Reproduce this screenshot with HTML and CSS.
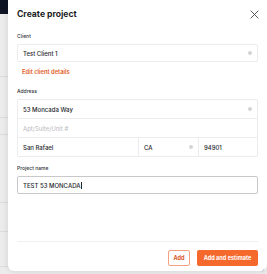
FILE: index.html
```html
<!DOCTYPE html>
<html lang="en">
<head>
    <meta charset="UTF-8">
    <meta name="viewport" content="width=device-width, initial-scale=1.0">
    <title>Create project</title>
    <link rel="stylesheet" href="styles.css">
</head>
<body>
    <div class="backdrop">
        <div class="page-top"></div>
        <div class="page-row" style="height: 62px"></div>
        <div class="page-row" style="height: 40px"></div>
        <div class="page-row" style="height: 16px"></div>
        <div class="page-row" style="height: 67px"></div>
        <div class="page-row" style="height: 28px"></div>
        <div class="page-row" style="height: 34px"></div>
    </div>

    <div class="modal">
        <div class="modal-head">
            <h1>Create project</h1>
            <button class="close" aria-label="Close">
                <svg width="9" height="9" viewBox="0 0 10 10"><path d="M1 1L9 9M9 1L1 9" stroke="#555" stroke-width="1.1" stroke-linecap="round"/></svg>
            </button>
        </div>

        <label class="label">Client</label>
        <div class="field">
            <span class="value">Test Client 1</span>
            <span class="clear"></span>
        </div>
        <a class="edit-link">Edit client details</a>

        <label class="label">Address</label>
        <div class="address">
            <div class="cell wide"><span class="value">53 Moncada Way</span><span class="clear"></span></div>
            <div class="cell wide"><span class="placeholder">Apt/Suite/Unit #</span></div>
            <div class="cell-row">
                <div class="cell city"><span class="value">San Rafael</span></div>
                <div class="cell state"><span class="value">CA</span><span class="clear"></span></div>
                <div class="cell zip"><span class="value">94901</span></div>
            </div>
        </div>

        <label class="label">Project name</label>
        <div class="field focused">
            <span class="value caps">TEST 53 MONCADA<span class="caret"></span></span>
        </div>

        <div class="modal-foot">
            <button class="btn btn-outline">Add</button>
            <button class="btn btn-primary">Add and estimate</button>
        </div>
        <svg class="grip" width="4" height="4" viewBox="0 0 4 4"><path d="M0.5 3.5L3.5 0.5M2 3.5L3.5 2" stroke="#b5b5b8" stroke-width="0.6"/></svg>
    </div>
</body>
</html>
```

FILE: styles.css
```css
body {
    margin: 0;
    width: 267px;
    height: 274px;
    overflow: hidden;
    position: relative;
    font-family: Inter, "Noto Sans", sans-serif;
    background: #ececed;
}
.backdrop {
    display: flex;
    flex-direction: column;
}
.page-top {
    height: 14px;
    background: #0f1424;
}
.page-row {
    border-bottom: 1px solid #dcdcde;
}
.modal {
    position: absolute;
    left: 8px;
    right: 0;
    top: -8px;
    bottom: 3px;
    background: #fff;
    border-radius: 6px;
    box-shadow: 0 0 6px rgba(0, 0, 0, 0.12);
    padding: 8px 9px 0 9px;
    display: flex;
    flex-direction: column;
}
.modal > * {
    flex-shrink: 0;
}
.modal-head {
    display: flex;
    align-items: center;
    justify-content: space-between;
    height: 28px;
    margin-bottom: 4px;
}
.modal-head h1 {
    margin: 0;
    font-size: 8.6px;
    font-weight: 700;
    color: #1a1d24;
}
.close {
    border: 0;
    background: none;
    padding: 0;
    margin-right: -1px;
    display: flex;
}
.label {
    display: block;
    font-size: 5px;
    font-weight: 500;
    color: #2f3238;
    height: 8px;
    line-height: 8px;
    margin-bottom: 4px;
}
.field {
    height: 18px;
    border: 1px solid #ececee;
    border-radius: 2px;
    box-sizing: border-box;
    display: flex;
    align-items: center;
    justify-content: space-between;
    padding: 0 5px;
}
.field.focused {
    border: 1px solid #c9c9cc;
    margin-bottom: 47px;
}
.value {
    font-size: 6px;
    font-weight: 500;
    color: #25272d;
}
.caps {
    display: flex;
    align-items: center;
}
.caret {
    width: 0.6px;
    height: 7px;
    background: #25272d;
}
.placeholder {
    font-size: 6px;
    color: #b8b9bd;
}
.clear {
    width: 4px;
    height: 4px;
    border-radius: 50%;
    background: #d4d4d6;
}
.edit-link {
    font-size: 5.8px;
    font-weight: 600;
    color: #e55a26;
    padding-left: 5px;
    height: 10px;
    line-height: 10px;
    margin: 5px 0 10px 0;
}
.address {
    border: 1px solid #ececee;
    border-radius: 2px;
    display: flex;
    flex-direction: column;
    margin-bottom: 7px;
}
.cell {
    height: 18px;
    box-sizing: border-box;
    display: flex;
    align-items: center;
    justify-content: space-between;
    padding: 0 5px;
}
.cell.wide {
    height: 19px;
    border-bottom: 1px solid #ececee;
}
.cell-row {
    display: flex;
}
.city {
    width: 121px;
    border-right: 1px solid #ececee;
}
.state {
    width: 60px;
    border-right: 1px solid #ececee;
}
.zip {
    flex: 1;
}
.modal-foot {
    border-top: 1px solid #f0f0f1;
    display: flex;
    justify-content: flex-end;
    gap: 7px;
    padding-top: 8px;
}
.btn {
    height: 16px;
    font-family: Inter, "Noto Sans", sans-serif;
    font-size: 5.6px;
    font-weight: 700;
    border-radius: 2px;
    padding: 0;
}
.btn-outline {
    background: #fff;
    border: 1px solid #f2a27f;
    color: #d8572a;
    width: 22px;
}
.btn-primary {
    background: #f5692d;
    border: 0;
    color: #fff;
    width: 61px;
}
.grip {
    align-self: flex-end;
    margin: 2px -7px 0 0;
}
```
